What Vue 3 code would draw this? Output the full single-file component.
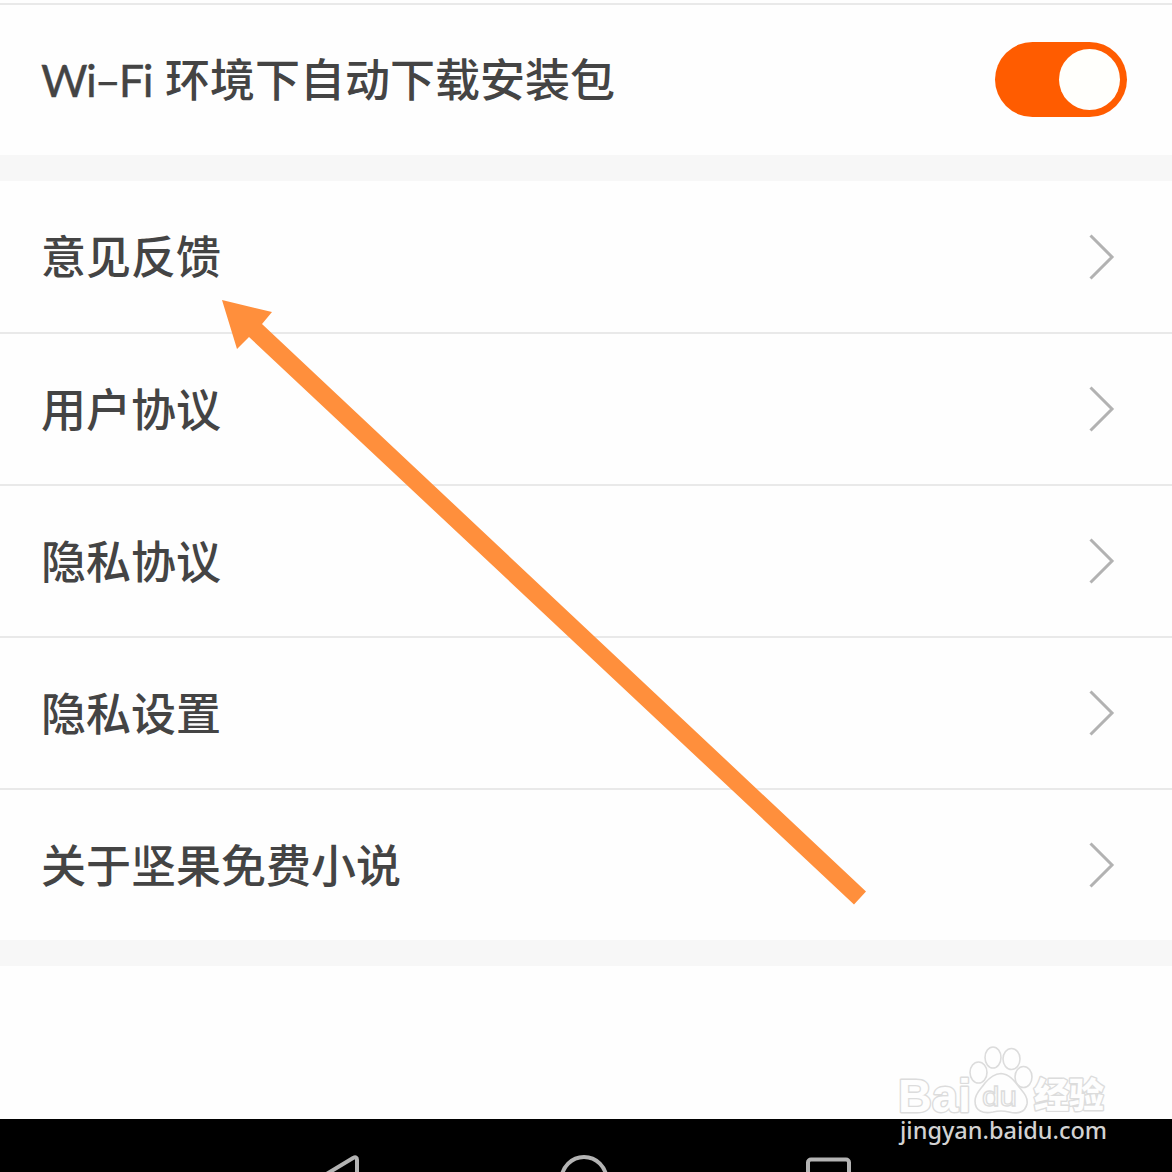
<script setup>
const items = ['意见反馈', '用户协议', '隐私协议', '隐私设置', '关于坚果免费小说']
</script>

<template>
  <main class="screen">
    <section class="group first">
      <div class="row">
        <span class="label"><span class="latin">Wi<span class="dash">–</span>Fi</span>环境下自动下载安装包</span>
        <span class="toggle"><span class="knob"></span></span>
      </div>
    </section>
    <div class="band"></div>
    <section class="group">
      <div v-for="item in items" :key="item" class="row item">
        <span class="label">{{ item }}</span>
        <svg class="chevron" width="28" height="48" viewBox="0 0 28 48">
          <path d="M3.5 2.5 25 24 3.5 45.5" fill="none" stroke="#b2b2b2" stroke-width="3" />
        </svg>
      </div>
    </section>
    <div class="band"></div>
    <div class="blank"></div>
    <nav class="navbar">
      <svg width="1172" height="53" viewBox="0 0 1172 53" fill="none" stroke="#b4b4b4" stroke-width="4">
        <path d="M357 75V41Q357 37 353 39L310 65" />
        <circle cx="584" cy="60.500" r="22.500" />
        <rect x="808" y="40.500" width="41" height="42" rx="3" />
      </svg>
    </nav>

    <svg class="arrow" width="1172" height="1172" viewBox="0 0 1172 1172">
      <path d="M222 300 272 312 262 324 866 891.500 854 904.500 249 337 237 349Z" fill="#ff8f3c" />
    </svg>

    <svg class="watermark" width="230" height="110" viewBox="890 1040 230 110">
      <g fill="#fefefe" stroke="#dcdcdc" stroke-width="1.600">
        <g class="logo" paint-order="stroke" stroke-width="2.800" stroke-linejoin="round">
          <text x="898" y="1112" font-size="47" textLength="73" lengthAdjust="spacingAndGlyphs">Bai</text>
          <text class="cjk" x="1034" y="1108" font-size="35" textLength="70" lengthAdjust="spacingAndGlyphs">经验</text>
        </g>
        <ellipse cx="978.500" cy="1072.500" rx="8.500" ry="10.500" />
        <ellipse cx="993" cy="1057.500" rx="8" ry="10.500" />
        <ellipse cx="1011.500" cy="1059" rx="8.500" ry="10.500" />
        <ellipse cx="1023.500" cy="1077" rx="8.500" ry="10.500" />
        <path d="M1001 1073.500C1009 1074 1014 1080 1019 1087C1025 1094 1028 1098 1027 1104C1025 1113 1017 1114 1009 1112Q1001 1110 993 1112C983 1114 975 1111 975 1101C975 1093 981 1089 985 1083C990 1077 994 1074 1001 1073.500Z" />
        <text class="du" x="982" y="1106" font-size="28" textLength="35" lengthAdjust="spacingAndGlyphs" stroke-width="1.300">du</text>
      </g>
      <text class="url" x="900" y="1139" font-size="24" textLength="207" lengthAdjust="spacingAndGlyphs">jingyan.baidu.com</text>
    </svg>
  </main>
</template>

<style>
body { margin: 0; background: #fefefe; overflow: hidden; }
</style>

<style scoped>
.screen {
  position: relative;
  box-sizing: border-box;
  width: 1172px;
  height: 1172px;
  padding-top: 3px;
  overflow: hidden;
  display: flex;
  flex-direction: column;
  background: #fefefe;
  color: #444;
  font-family: "Noto Sans CJK SC", sans-serif;
}
.first { border-top: 2px solid #e9e9e9; }
.row {
  box-sizing: border-box;
  height: 150px;
  padding: 0 45px 1px 41px;
  display: flex;
  align-items: center;
  justify-content: space-between;
}
.item { height: 152px; padding: 0 57px 0 41px; }
.item:first-child { height: 151px; }
.item + .item { border-top: 2px solid #e9e9e9; }
.label {
  margin-bottom: 2px;
  display: flex;
  align-items: baseline;
  font-size: 45px;
  line-height: 60px;
  font-weight: 500;
  white-space: nowrap;
}
.item .label { margin-bottom: 3px; }
.latin {
  width: 124px;
  font-family: Lato, sans-serif;
  font-weight: 400;
  letter-spacing: -1.500px;
  -webkit-text-stroke: 0.4px #444;
}
.dash { margin: 0 -0.500px; }
.toggle {
  box-sizing: border-box;
  width: 132px;
  height: 75px;
  padding: 0 7.500px;
  border-radius: 38px;
  display: flex;
  align-items: center;
  justify-content: flex-end;
  background: #ff5c00;
}
.knob { width: 61px; height: 61px; border-radius: 50%; background: #fffffc; }
.band { height: 26px; background: #f7f7f7; }
.blank { height: 153px; }
.navbar { height: 53px; background: #000; }
.navbar svg { display: block; }
.arrow { position: absolute; left: 0; top: 0; }
.watermark { position: absolute; left: 890px; top: 1040px; }
.logo { font-family: "Liberation Sans", sans-serif; font-weight: 700; }
.cjk { font-family: "Noto Sans CJK SC", sans-serif; font-weight: 900; }
.du { font-family: "Liberation Sans", sans-serif; font-weight: 400; }
.url { font-family: "Noto Sans", sans-serif; font-weight: 500; fill: #d2d2d2; }
</style>
